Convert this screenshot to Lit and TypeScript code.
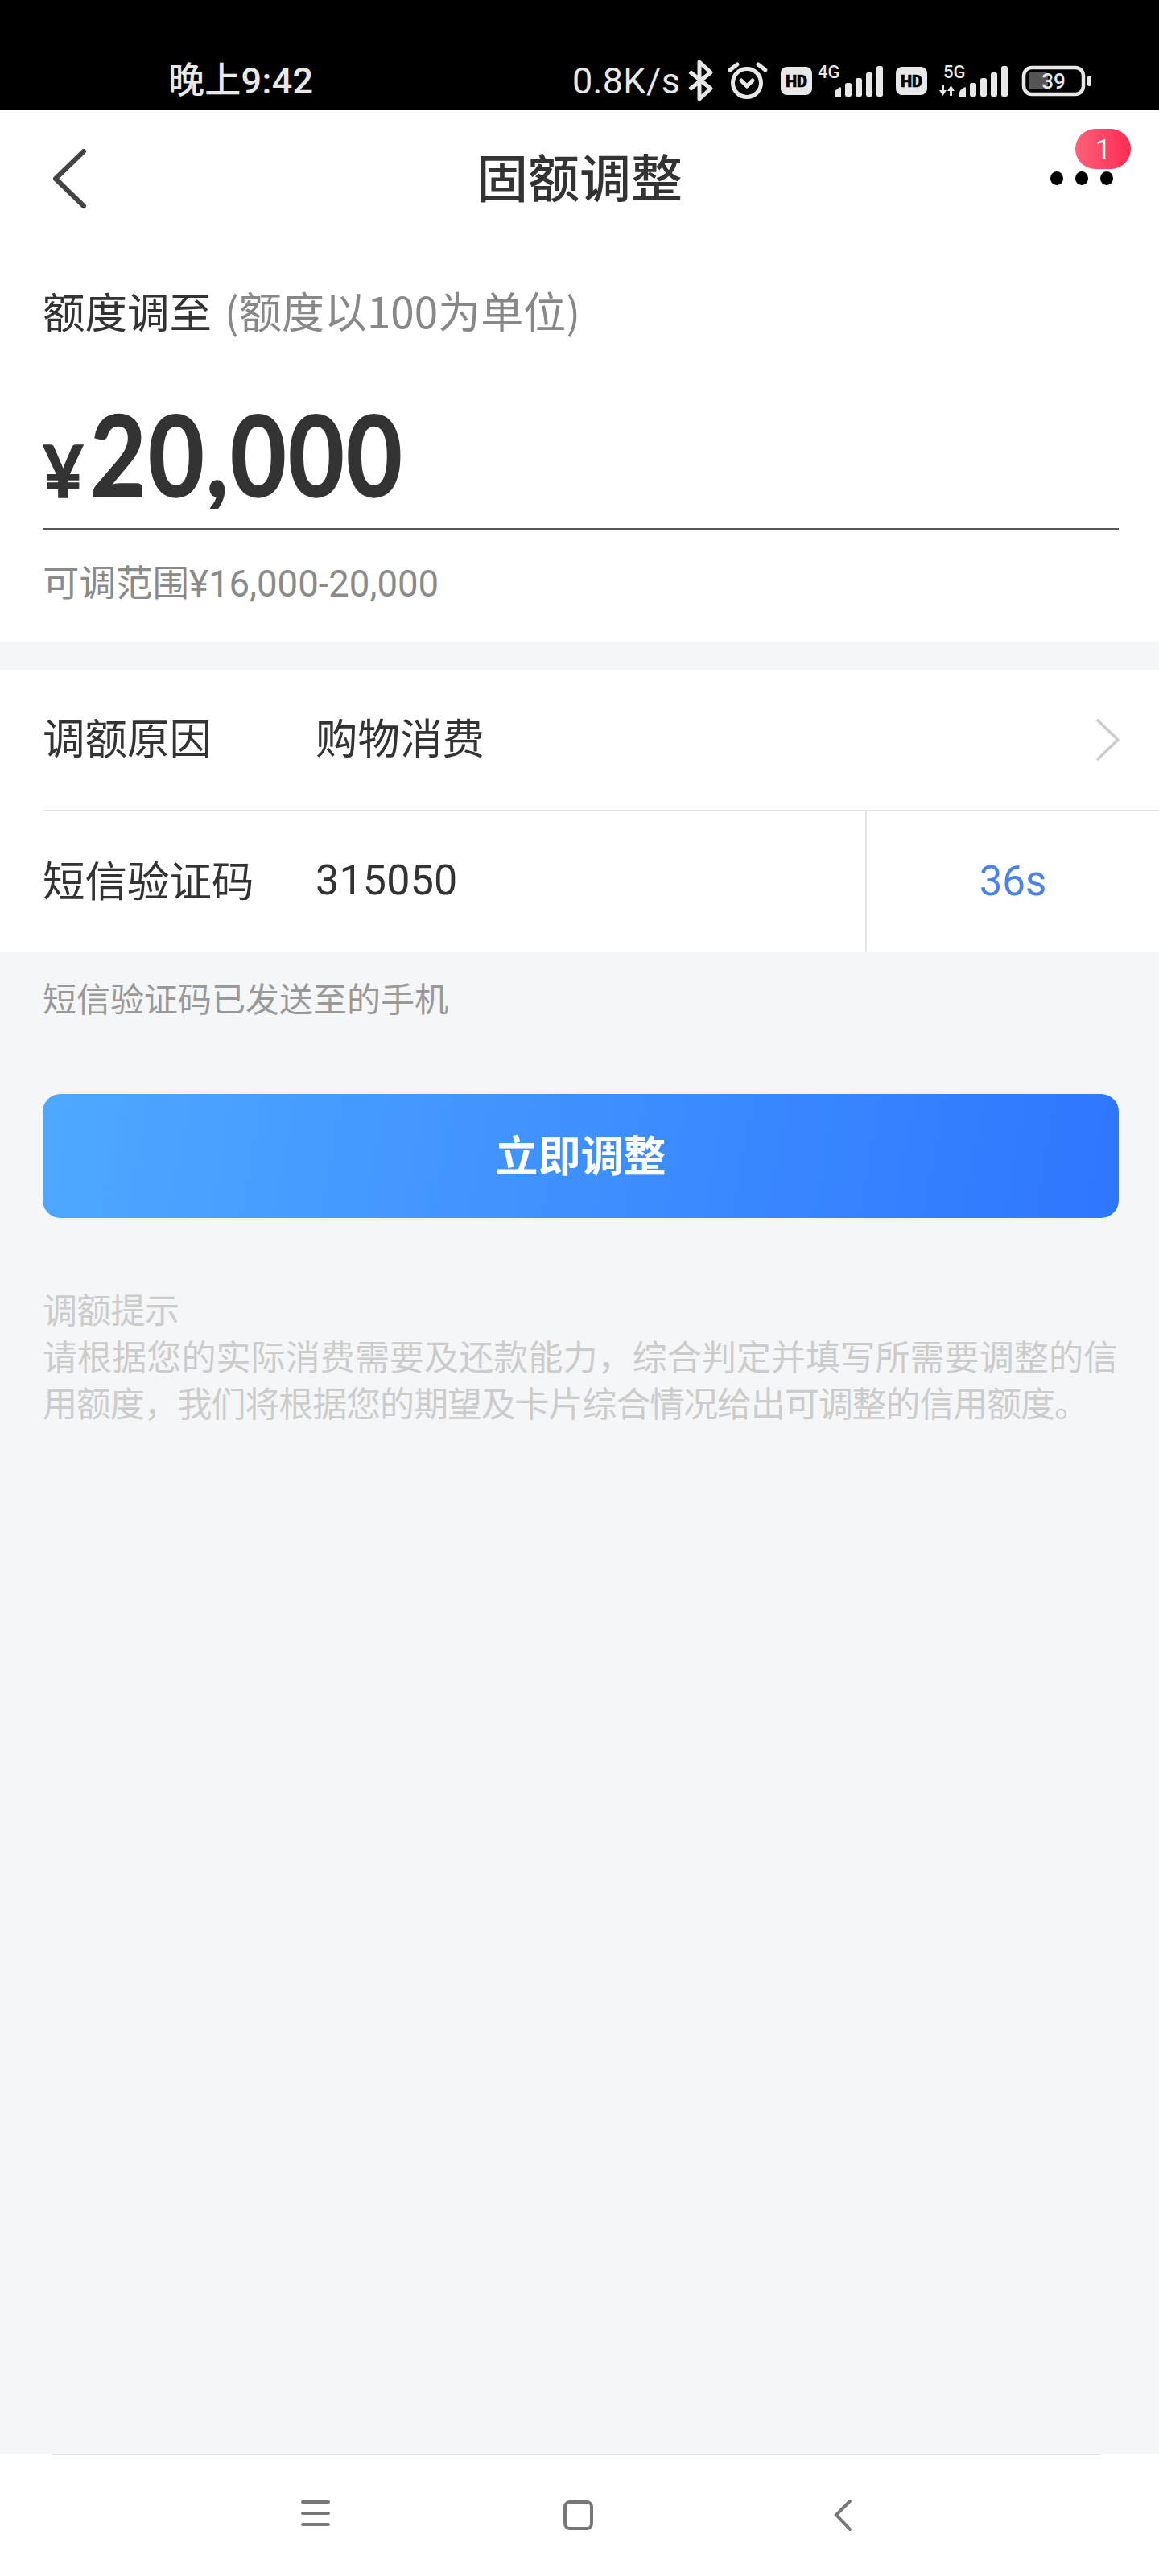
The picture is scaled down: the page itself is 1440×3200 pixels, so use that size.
import { LitElement, html, css, svg } from "lit";
import { customElement } from "lit/decorators.js";

const signal = (x: number) => svg`
  <path d="M${x} 119v-5q0-2 2-3.5l4-3q2-1 2 1V119z"/>
  <rect x="${x + 13}" y="102" width="8" height="17" rx="2.5"/>
  <rect x="${x + 26}" y="96" width="8" height="23" rx="2.5"/>
  <rect x="${x + 39}" y="89" width="8" height="30" rx="2.5"/>
  <rect x="${x + 52}" y="81" width="8" height="38" rx="2.5"/>`;

const hd = (x: number) => svg`
  <rect x="${x}" y="82" width="39" height="35" rx="8"/>
  <text x="${x + 19.5}" y="107" font-size="20" font-weight="900" font-family="Roboto" fill="#000" stroke="#000" stroke-width=".6" text-anchor="middle">HD</text>`;

@customElement("app-root")
export class AppRoot extends LitElement {
  static styles = css`
    :host { display: block; width: 1440px; height: 3200px; font-family: "Noto Sans CJK SC", Roboto, sans-serif; color: #333; }
    .page { height: 3200px; display: flex; flex-direction: column; background: #f5f6f8; }
    .status { height: 137px; background: #000; color: #e8e8e8; display: flex; align-items: center; padding: 64px 0 0 209px; box-sizing: border-box; font-family: Roboto, "Noto Sans CJK SC", sans-serif; font-weight: 500; }
    .time { font-size: 45px; line-height: 58px; width: 502px; letter-spacing: .3px; }
    .speed { font-size: 45px; line-height: 58px; width: 144px; letter-spacing: .3px; font-weight: 400; }
    .sicons { display: block; flex: none; }
    .nav { height: 170px; background: #fff; display: grid; grid-template-columns: 1fr auto 1fr; align-items: center; }
    .back { margin-left: 65px; display: block; }
    .title { font-size: 64px; line-height: 90px; font-weight: 500; margin-bottom: 10px; }
    .more { justify-self: end; width: 135px; height: 170px; position: relative; }
    .dots { position: absolute; left: 0; top: 76px; display: flex; gap: 15px; }
    .dots i { display: block; width: 16px; height: 17px; border-radius: 50%; background: #000; }
    .badge { position: absolute; left: 31px; top: 23px; width: 69px; height: 50px; border-radius: 25px; background: linear-gradient(90deg, #ff6079, #ff2b52); color: #fff; font: 34px/50px Roboto, sans-serif; text-align: center; }
    .amount { background: #fff; padding: 0 50px 0 53px; height: 490px; box-sizing: border-box; }
    .amt-title { font-size: 52.5px; line-height: 76px; padding-top: 40px; display: flex; gap: 16px; }
    .amt-title span { color: #888; font-size: 53px; }
    .input { margin-top: 62px; padding-bottom: 24px; border-bottom: 2px solid #5a5a5a; }
    .clip { height: 147px; overflow: hidden; display: flex; }
    .num { font-family: Lato, sans-serif; font-weight: 700; color: #333; transform-origin: 0 0; white-space: nowrap; -webkit-text-stroke: 1.5px #333; }
    .yen { font-size: 90px; line-height: 196px; width: 59px; flex: none; transform: scaleX(.97); }
    .big { font-size: 139px; line-height: 158px; transform: scaleX(.865); letter-spacing: 2.5px; }
    .range { color: #8a8a8a; font-size: 45.5px; line-height: 64px; margin-top: 36px; font-family: Roboto, "Noto Sans CJK SC", sans-serif; }
    .form { margin-top: 35px; background: #fff; }
    .row { height: 176px; display: flex; align-items: center; font-size: 52.5px; box-sizing: border-box; margin-left: 53px; }
    .row.first { height: 174px; }
    .row.first .lbl, .row.first .val { padding-bottom: 10px; }
    .row + .row { border-top: 2px solid #e9e9e9; }
    .lbl { width: 339px; flex: none; padding-bottom: 8px; }
    .val { flex: 1; padding-bottom: 8px; }
    .code { font-family: Roboto, sans-serif; font-size: 52px; letter-spacing: .2px; padding-bottom: 4px; }
    .chev { display: block; margin-right: 49px; }
    .cd { align-self: stretch; width: 363px; border-left: 2px solid #e6e6e6; display: flex; align-items: center; justify-content: center; color: #4a82ea; font: 51px Roboto, sans-serif; padding-bottom: 2px; box-sizing: content-box; }
    .note { font-size: 42px; line-height: 60px; color: #999; margin: 27px 0 0 53px; }
    .btn { margin: 90px 50px 0 53px; height: 154px; border-radius: 22px; background: linear-gradient(100deg, #4fa9ff, #2e76ff); color: #fff; font-size: 53px; font-weight: 700; display: flex; align-items: center; justify-content: center; padding-bottom: 6px; box-sizing: border-box; }
    .tips { margin: 83px 0 0 53px; color: #ccc; font-size: 43px; line-height: 58px; white-space: nowrap; }
    .tips div:first-child { letter-spacing: -.7px; }
    .tips div:nth-child(2) { letter-spacing: .1px; }
    .tips div:last-child { letter-spacing: -1.1px; }
    .spacer { flex: 1; }
    .sysnav { height: 152px; background: #fff; display: flex; flex-direction: column; }
    .rule { height: 2px; margin: 0 73px 0 65px; background: #e2e2e2; flex: none; }
    .sysnav svg { display: block; }
  `;

  render() {
    return html`<div class="page">
      <div class="status">
        <div class="time">晚上9:42</div>
        <div class="speed">0.8K/s</div>
        <svg class="sicons" width="510" height="60" viewBox="855 70 510 60" fill="#e8e8e8">
          <path d="M857 88l26 21-14 13V76l14 13-26 21" fill="none" stroke="#e8e8e8" stroke-width="5" stroke-linejoin="round"/>
          <circle cx="928" cy="102" r="17.5" fill="none" stroke="#e8e8e8" stroke-width="5"/>
          <path d="M921 99l7 7 7-7" fill="none" stroke="#e8e8e8" stroke-width="5" stroke-linecap="round" stroke-linejoin="round"/>
          <path d="M907 86l9-7M951 86l-9-7" fill="none" stroke="#e8e8e8" stroke-width="5" stroke-linecap="round"/>
          ${hd(970)}
          <text x="1016" y="96" font-size="22" font-family="Roboto">4G</text>
          ${signal(1037)}
          ${hd(1113)}
          <text x="1172" y="96" font-size="22" font-family="Roboto">5G</text>
          <path d="M1170 105h3v6h3l-4.500 7-4.500-7h3zM1180 118h3v-6h3l-4.500-7-4.500 7h3z"/>
          ${signal(1192)}
          <rect x="1272" y="83" width="74" height="33" rx="10" fill="none" stroke="#e8e8e8" stroke-width="4.500"/>
          <rect x="1278" y="89" width="24" height="21" rx="3" fill="#555"/>
          <text x="1309" y="109" font-size="26" font-weight="500" font-family="Roboto" text-anchor="middle">39</text>
          <rect x="1351" y="93" width="5" height="13" rx="2.500"/>
        </svg>
      </div>
      <div class="nav">
        <svg class="back" width="44" height="74" viewBox="0 0 44 74"><path d="M39 3L4 37l35 34" fill="none" stroke="#444" stroke-width="6" stroke-linecap="round" stroke-linejoin="round"/></svg>
        <div class="title">固额调整</div>
        <div class="more">
          <div class="dots"><i></i><i></i><i></i></div>
          <div class="badge">1</div>
        </div>
      </div>
      <div class="amount">
        <div class="amt-title">额度调至 <span>(额度以100为单位)</span></div>
        <div class="input"><div class="clip"><div class="num yen">¥</div><div class="num big">20,000</div></div></div>
        <div class="range">可调范围¥16,000-20,000</div>
      </div>
      <div class="form">
        <div class="row first"><div class="lbl">调额原因</div><div class="val">购物消费</div>
          <svg class="chev" width="30" height="54" viewBox="0 0 30 54"><path d="M2 2l26 25L2 52" fill="none" stroke="#ccc" stroke-width="3.500"/></svg></div>
        <div class="row"><div class="lbl">短信验证码</div><div class="val code">315050</div><div class="cd">36s</div></div>
      </div>
      <div class="note">短信验证码已发送至的手机</div>
      <div class="btn">立即调整</div>
      <div class="tips">
        <div>调额提示</div>
        <div>请根据您的实际消费需要及还款能力，综合判定并填写所需要调整的信</div>
        <div>用额度，我们将根据您的期望及卡片综合情况给出可调整的信用额度。</div>
      </div>
      <div class="spacer"></div>
      <div class="sysnav">
        <div class="rule"></div>
        <svg width="1440" height="150" viewBox="0 3050 1440 150" fill="none" stroke="#777">
          <path d="M376 3108h32M376 3122h32M376 3136h32" stroke-width="4" stroke-linecap="round"/>
          <rect x="702" y="3108" width="33" height="33" rx="6" stroke-width="4"/>
          <path d="M1056 3107l-17 17 17 18" stroke-width="4" stroke-linecap="round"/>
        </svg>
      </div>
    </div>`;
  }
}
